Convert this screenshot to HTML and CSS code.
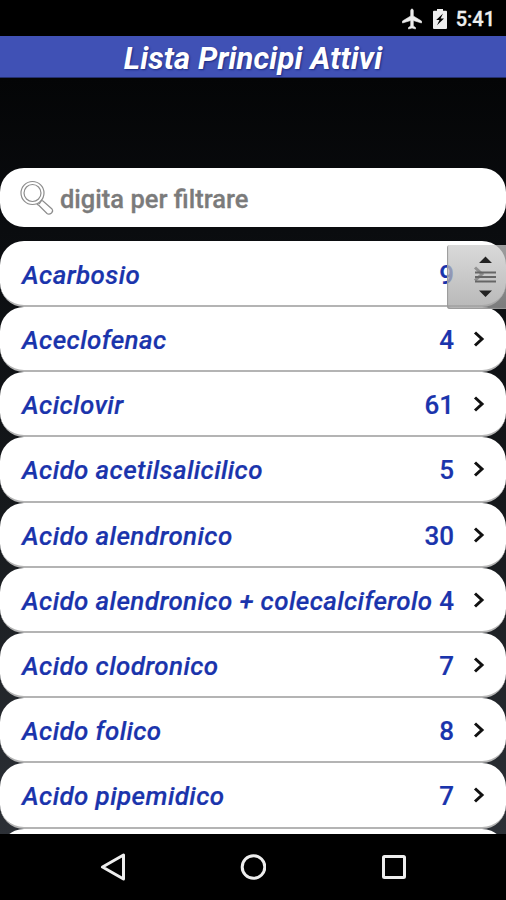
FILE: index.html
```html
<!DOCTYPE html>
<html lang="it">
<head>
    <meta charset="UTF-8">
    <meta name="viewport" content="width=device-width, initial-scale=1.0">
    <title>Lista Principi Attivi</title>
    <link rel="stylesheet" href="styles.css">
</head>
<body>
    <div class="screen">
        <div class="status-bar">
            <svg class="plane-icon" width="24" height="24" viewBox="0 0 24 24"><path fill="#eee" stroke="#eee" stroke-width=".6" d="M21.5 16v-2l-8.2-5V3.500c0-.8-.6-1.500-1.300-1.500s-1.300.7-1.300 1.500V9l-8.200 5v2l8.200-2.500V19l-2.200 1.500V22l3.500-1 3.500 1v-1.500L13.300 19v-5.500z"/></svg>
            <svg class="battery-icon" width="14" height="20" viewBox="0 0 14 22" preserveAspectRatio="none"><path fill="#eee" d="M4 0h6v2H13q1 0 1 1v18q0 1-1 1H1q-1 0-1-1V3q0-1 1-1h3z"/><path fill="#000" d="M10 5L3.200 12h3.300L4 18l7-7.500H7.600z"/></svg>
            <span class="clock">5:41</span>
        </div>

        <h1 class="title">Lista Principi Attivi</h1>

        <div class="content">
            <div class="search">
                <svg width="35" height="36" viewBox="0 0 35 36" fill="none" stroke="#8c8c8c" stroke-width="1.200">
                    <circle cx="12.500" cy="13" r="11.500"/>
                    <circle cx="12.500" cy="13" r="8.500"/>
                    <path d="M17.500 24.500l2-1 2-3 1.500.5 9 8q1.500 2-.5 4-2.500 2-4.500.5l-8-8z"/>
                </svg>
                <span>digita per filtrare</span>
            </div>

            <div class="list">
                <div class="row"><span class="name">Acarbosio</span><span class="count">9</span><svg class="chevron" viewBox="0 0 12 16"><path d="M2 1.500l7 6.500-7 6.500"/></svg></div>
                <div class="row"><span class="name">Aceclofenac</span><span class="count">4</span><svg class="chevron" viewBox="0 0 12 16"><path d="M2 1.500l7 6.500-7 6.500"/></svg></div>
                <div class="row"><span class="name">Aciclovir</span><span class="count">61</span><svg class="chevron" viewBox="0 0 12 16"><path d="M2 1.500l7 6.500-7 6.500"/></svg></div>
                <div class="row"><span class="name">Acido acetilsalicilico</span><span class="count">5</span><svg class="chevron" viewBox="0 0 12 16"><path d="M2 1.500l7 6.500-7 6.500"/></svg></div>
                <div class="row"><span class="name">Acido alendronico</span><span class="count">30</span><svg class="chevron" viewBox="0 0 12 16"><path d="M2 1.500l7 6.500-7 6.500"/></svg></div>
                <div class="row"><span class="name">Acido alendronico + colecalciferolo</span><span class="count">4</span><svg class="chevron" viewBox="0 0 12 16"><path d="M2 1.500l7 6.500-7 6.500"/></svg></div>
                <div class="row"><span class="name">Acido clodronico</span><span class="count">7</span><svg class="chevron" viewBox="0 0 12 16"><path d="M2 1.500l7 6.500-7 6.500"/></svg></div>
                <div class="row"><span class="name">Acido folico</span><span class="count">8</span><svg class="chevron" viewBox="0 0 12 16"><path d="M2 1.500l7 6.500-7 6.500"/></svg></div>
                <div class="row"><span class="name">Acido pipemidico</span><span class="count">7</span><svg class="chevron" viewBox="0 0 12 16"><path d="M2 1.500l7 6.500-7 6.500"/></svg></div>
                <div class="row"></div>

                <!-- Fast scroll thumb -->
                <div class="scroll-thumb">
                    <svg width="59" height="64" viewBox="0 0 59 64">
                        <path fill="#222" d="M38.500 11.500L45 18H32zM32 45.500h13l-6.500 6.500z"/>
                        <path stroke="#666" stroke-width="2" d="M28 27.500h21M28 32h21M28 36.500h21"/>
                    </svg>
                </div>
            </div>
        </div>

        <div class="nav-bar">
            <svg width="26" height="28" viewBox="0 0 26 28"><path d="M23.500 2v24L2.500 14z"/></svg>
            <svg width="26" height="28" viewBox="0 0 26 28"><circle cx="13.500" cy="14" r="11.300"/></svg>
            <svg width="26" height="28" viewBox="0 0 26 28"><rect x="2.500" y="3.500" width="21" height="21" rx="1"/></svg>
        </div>
    </div>
</body>
</html>
```
FILE: styles.css
```css
body {
    margin: 0;
    background: #000;
    font-family: Roboto, sans-serif;
}

.screen {
    width: 506px;
    height: 900px;
    display: flex;
    flex-direction: column;
    overflow: hidden;
}

.status-bar {
    flex: none;
    height: 36px;
    box-sizing: border-box;
    padding: 1px 11px 0 0;
    display: flex;
    align-items: center;
    justify-content: flex-end;
    color: #eee;
}

.plane-icon {
    margin-right: 9px;
}

.battery-icon {
    margin-right: 9px;
}

.clock {
    font-size: 20px;
    font-weight: 500;
    line-height: 36px;
    -webkit-text-stroke: 0.3px #eee;
}

.title {
    flex: none;
    height: 41px;
    margin: 0;
    background: #4051b5;
    border-bottom: 1px solid #24306e;
    color: #fff;
    font-size: 31px;
    font-style: italic;
    font-weight: 700;
    letter-spacing: 0.1px;
    line-height: 46px;
    text-align: center;
    text-shadow: 1px 1px 2px #1b2a80;
}

.content {
    flex: none;
    height: 756px;
    box-sizing: border-box;
    padding-top: 90px;
    overflow: hidden;
    background: linear-gradient(#040506, #0a0c0f 20%, #15181b 55%, #2c3036);
}

.search {
    height: 59px;
    margin-bottom: 14px;
    padding-left: 20px;
    display: flex;
    align-items: center;
    gap: 5px;
    background: #fff;
    border-radius: 24px;
    color: #7b7b7b;
    font-size: 25.5px;
    font-weight: 500;
    -webkit-text-stroke: 0.3px #7b7b7b;
}

.search span {
    padding-top: 3px;
}

.list {
    position: relative;
}

.row {
    height: 65.2px;
    box-sizing: border-box;
    padding: 3px 21px 0 22px;
    display: flex;
    align-items: center;
    background: #fff;
    border-bottom: 2px solid #b4b4b4;
    border-radius: 24px;
    color: #1a34ac;
    font-size: 26px;
    font-weight: 500;
    -webkit-text-stroke: 0.2px #1a34ac;
}

.row:first-child {
    height: 66px;
}

.name {
    flex: 1;
    font-style: italic;
    letter-spacing: 0.4px;
    white-space: nowrap;
}

.count {
    margin-right: 19px;
}

.chevron {
    width: 12px;
    height: 16px;
    margin-top: -2px;
    fill: none;
    stroke: #111;
    stroke-width: 3;
}

.scroll-thumb {
    position: absolute;
    top: 4px;
    right: 0;
    width: 59px;
    height: 64px;
    border-radius: 3px 0 0 3px;
    background: linear-gradient(rgba(205, 205, 205, 0.75), rgba(160, 160, 160, 0.75));
    box-shadow: inset 1px -1px 1px #999;
}

.nav-bar {
    flex: 1;
    display: flex;
    align-items: center;
    justify-content: center;
    gap: 114.500px;
    background: #000;
}

.nav-bar svg {
    fill: none;
    stroke: #eee;
    stroke-width: 3;
    stroke-linejoin: round;
}
```
